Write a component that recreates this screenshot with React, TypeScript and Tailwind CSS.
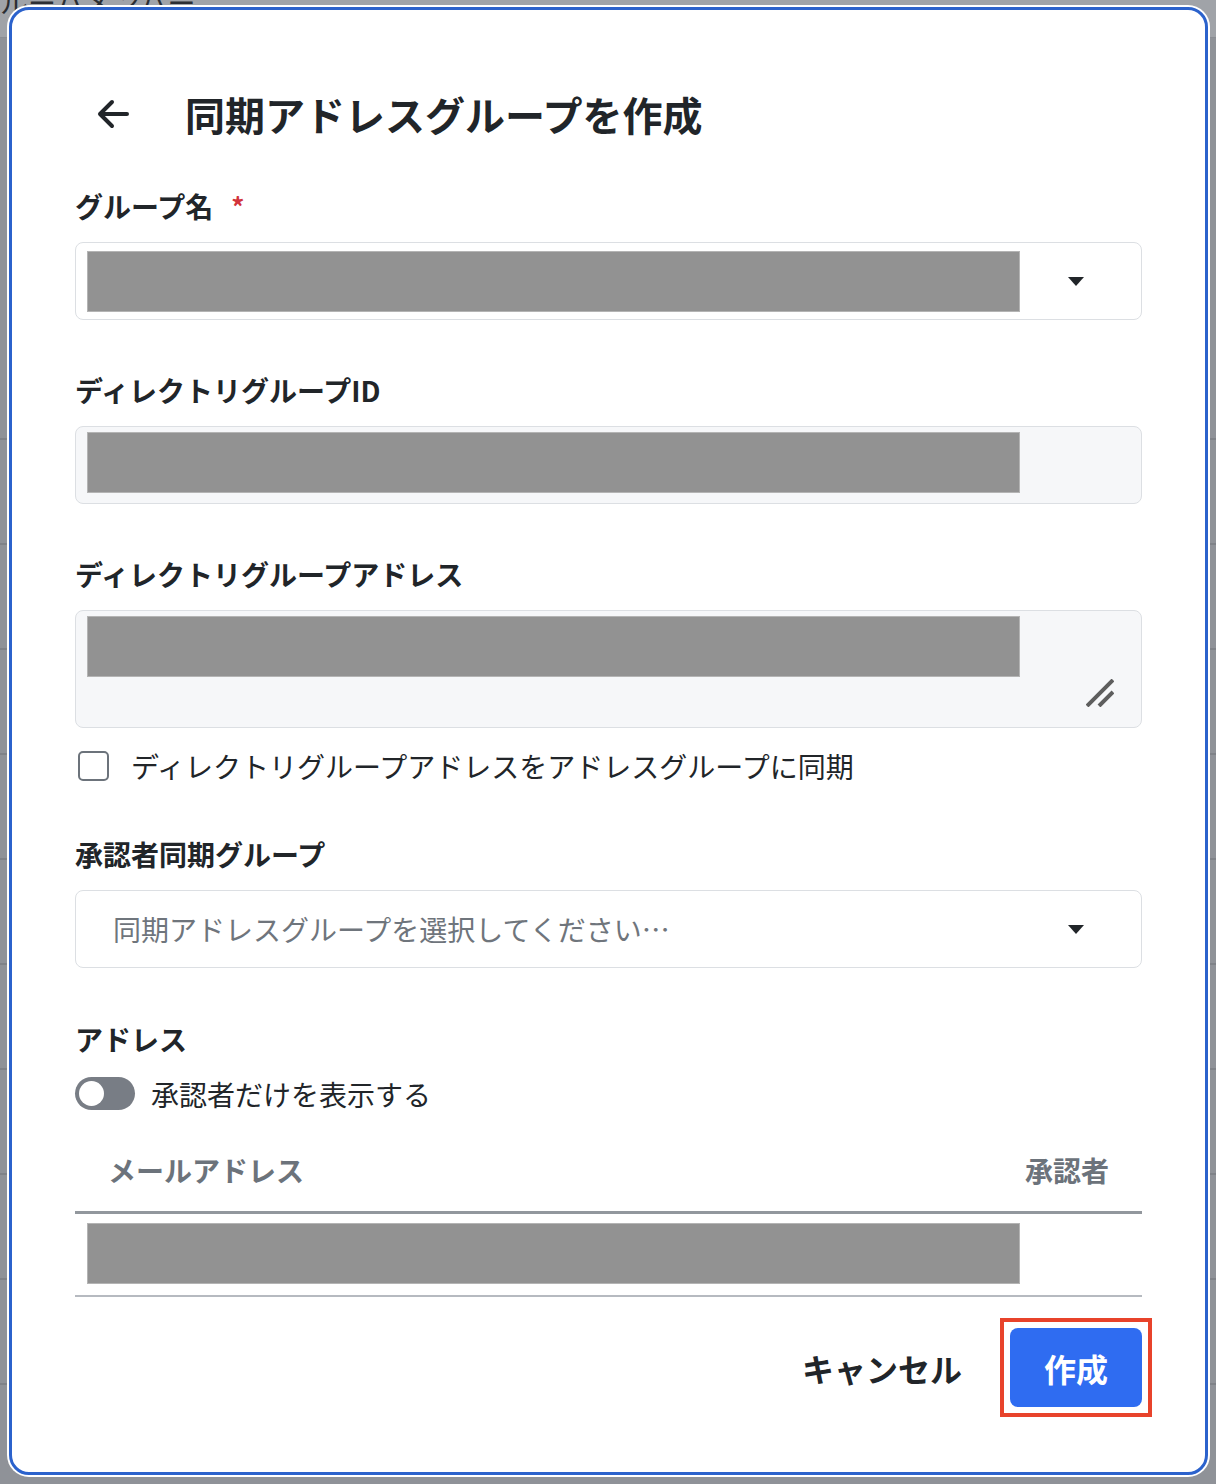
import React from "react";

const LABEL = "text-[28px] leading-[40px] font-bold text-[#212529]";

const Redacted = ({ className = "" }: { className?: string }) => (
  <div className={`w-[933px] h-[61px] bg-[#929292] border border-[#b4b4b4] ${className}`} />
);

const Caret = () => (
  <svg width="16" height="9" viewBox="0 0 16 9" className="shrink-0">
    <path d="M0 0 L16 0 L8 9 Z" fill="#212529" />
  </svg>
);

const BackArrow = () => (
  <svg width="34" height="32" viewBox="0 0 34 32" fill="none">
    <path
      d="M31 16 H4 M16 4 L4 16 L16 28"
      stroke="#212529"
      strokeWidth="4"
      strokeLinecap="round"
      strokeLinejoin="round"
    />
  </svg>
);

const ResizeHandle = () => (
  <svg width="28" height="28" viewBox="0 0 28 28">
    <path d="M1 27 L27 1 M13 27 L27 13" stroke="#5e5e5e" strokeWidth="4" />
  </svg>
);

// dimmed page behind the dialog
const BackgroundPage = () => {
  const rows = Array.from({ length: 10 });
  return (
    <div className="w-[1216px] h-[1484px] bg-[#8f9298] overflow-hidden">
      <div className="h-[38px] bg-[#a0a3a8] border-b border-[#8a8d93] overflow-hidden">
        <div className="-mt-[18px] text-[28px] leading-[40px] text-[#2b2e33]">ルーハメンバー</div>
      </div>
      <div className="h-[402px] border-b-2 border-[#7f8288]" />
      {rows.map((_, i) => (
        <div key={i} className="h-[105px] border-b-2 border-[#7f8288]" />
      ))}
    </div>
  );
};

const App = () => {
  return (
    <div className="relative w-[1216px] h-[1484px] overflow-hidden font-['Noto_Sans_CJK_JP',sans-serif]">
      <BackgroundPage />

      <div className="absolute left-[7px] top-[5px] w-[1203px] bg-white rounded-[22px] p-[2px]">
        <div className="border-[3px] border-[#2b62cc] rounded-[20px] px-[63px] pt-[76px] pb-[65px]">
          {/* header */}
          <div className="flex items-center h-[56px]">
            <span className="ml-[21px] flex">
              <BackArrow />
            </span>
            <h2 className="ml-[55px] text-[40px] leading-[56px] font-bold text-[#212529]">
              同期アドレスグループを作成
            </h2>
          </div>

          {/* group name */}
          <div className={`mt-[44px] ${LABEL} flex`}>
            グループ名
            <span className="ml-[18px] text-[#d2343c] text-[26px]">*</span>
          </div>
          <div className="mt-[16px] h-[78px] border border-[#dcdfe3] rounded-[8px] bg-white flex items-center">
            <Redacted className="ml-[11px]" />
            <div className="ml-auto mr-[57px] flex">
              <Caret />
            </div>
          </div>

          {/* directory group id */}
          <div className={`mt-[50px] ${LABEL}`}>ディレクトリグループID</div>
          <div className="mt-[16px] h-[78px] border border-[#dcdfe3] rounded-[8px] bg-[#f6f7f9] pt-[5px]">
            <Redacted className="ml-[11px]" />
          </div>

          {/* directory group address */}
          <div className={`mt-[50px] ${LABEL}`}>ディレクトリグループアドレス</div>
          <div className="relative mt-[16px] h-[118px] border border-[#dcdfe3] rounded-[8px] bg-[#f6f7f9] pt-[5px]">
            <Redacted className="ml-[11px]" />
            <div className="absolute right-[27px] bottom-[20px] flex">
              <ResizeHandle />
            </div>
          </div>

          {/* checkbox */}
          <div className="mt-[18px] h-[40px] flex items-center">
            <span className="ml-[3px] w-[31px] h-[30px] border-2 border-[#6c737b] rounded-[5px] bg-white" />
            <span className="ml-[22px] text-[28px] leading-[40px] text-[#212529]">
              ディレクトリグループアドレスをアドレスグループに同期
            </span>
          </div>

          {/* approver group */}
          <div className={`mt-[48px] ${LABEL}`}>承認者同期グループ</div>
          <div className="mt-[16px] h-[78px] border border-[#dcdfe3] rounded-[8px] bg-white flex items-center">
            <span className="ml-[37px] text-[28px] leading-[40px] text-[#6f757c]">
              同期アドレスグループを選択してください…
            </span>
            <div className="ml-auto mr-[57px] flex">
              <Caret />
            </div>
          </div>

          {/* addresses */}
          <div className={`mt-[51px] ${LABEL}`}>アドレス</div>
          <div className="mt-[18px] h-[33px] flex items-center">
            <span className="w-[60px] h-[33px] rounded-full bg-[#787d85] flex items-center pl-[4px]">
              <span className="w-[25px] h-[25px] rounded-full bg-white" />
            </span>
            <span className="ml-[16px] text-[28px] leading-[40px] text-[#212529]">
              承認者だけを表示する
            </span>
          </div>

          <div className="mt-[19px]">
            <div className="flex justify-between px-[33px] pt-[21px] pb-[21px] border-b-[3px] border-[#92979d] text-[28px] leading-[40px] font-bold text-[#6c737b]">
              <span>メールアドレス</span>
              <span>承認者</span>
            </div>
            <div className="pt-[9px] pb-[11px] border-b-2 border-[#b6bac0]">
              <Redacted className="ml-[12px]" />
            </div>
          </div>

          {/* footer */}
          <div className="mt-[31px] flex justify-end items-center">
            <button className="text-[32px] leading-[44px] font-bold text-[#212529]">キャンセル</button>
            <div className="relative ml-[48px]">
              <button className="w-[132px] h-[79px] rounded-[8px] bg-[#2f6cf1] text-white text-[32px] leading-[44px] font-bold">
                作成
              </button>
              <div className="absolute -inset-[10px] border-4 border-[#e8432b] pointer-events-none" />
            </div>
          </div>
        </div>
      </div>
    </div>
  );
};

export default App;
